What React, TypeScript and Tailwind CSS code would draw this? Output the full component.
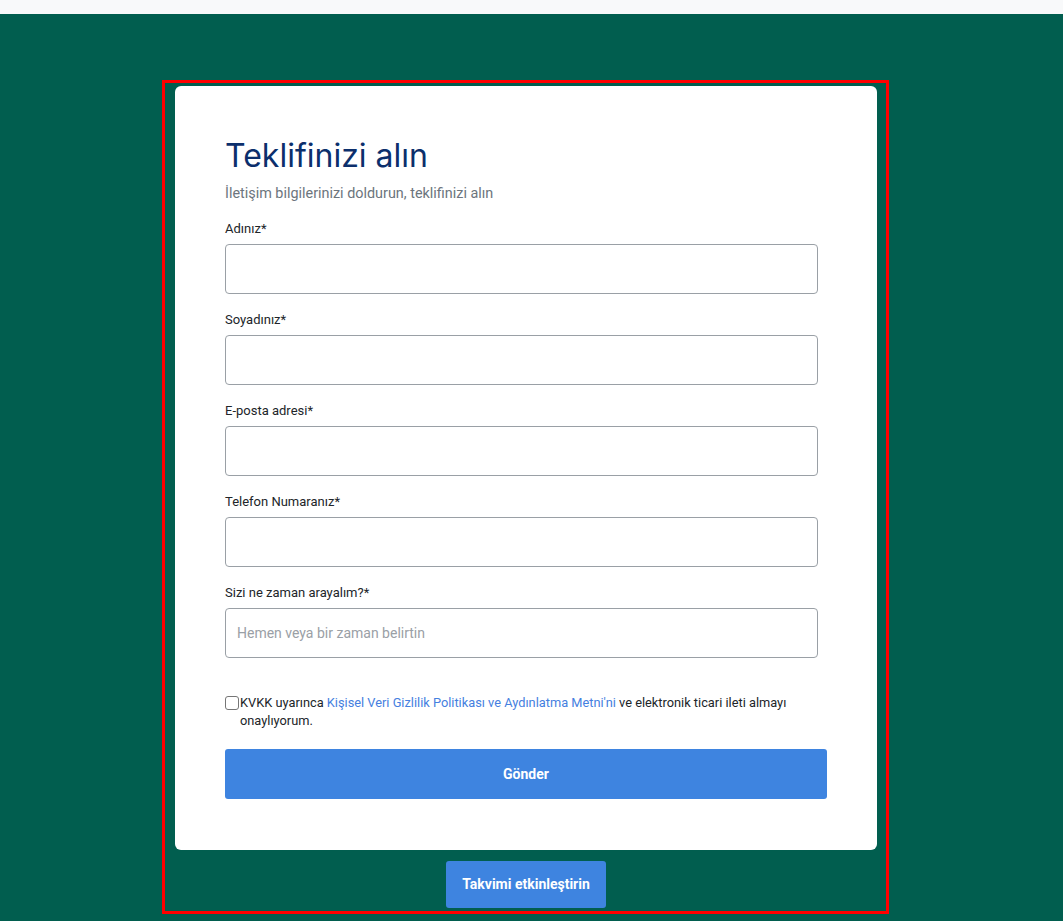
import React from 'react';

const fields = [
  { label: 'Adınız*', placeholder: '' },
  { label: 'Soyadınız*', placeholder: '' },
  { label: 'E-posta adresi*', placeholder: '' },
  { label: 'Telefon Numaranız*', placeholder: '' },
  { label: 'Sizi ne zaman arayalım?*', placeholder: 'Hemen veya bir zaman belirtin' },
];

const App: React.FC = () => {
  return (
    <div className="min-h-screen bg-[#015e4f]" style={{ fontFamily: 'Roboto, "Liberation Sans", sans-serif' }}>
      <div className="h-[14px] bg-[#f8f9fa]" />
      <div className="flex pt-[66px] pl-[162px]">
        <div className="w-[727px] border-[3px] border-[#ff0000] pl-[10px] pr-[9px] pt-[3px] flex flex-col items-center">
          <div className="w-full bg-white rounded-[6px] pl-[50px] pr-[50px] pt-[51px] pb-[51px]">
            <h1
              className="text-[32px] leading-[38px] text-[#0c2f6c]"
              style={{ fontFamily: 'Inter, "Open Sans", sans-serif' }}
            >
              Teklifinizi alın
            </h1>
            <p className="mt-[9px] text-[14.4px] leading-[20px] text-[#6c757d]">
              İletişim bilgilerinizi doldurun, teklifinizi alın
            </p>
            <form className="mt-[15px]" onSubmit={(e) => e.preventDefault()}>
              {fields.map((f) => (
                <div key={f.label} className="mb-[16px]">
                  <label className="block text-[13px] leading-[20px] text-[#212529] mb-[5px]">{f.label}</label>
                  <input
                    type="text"
                    placeholder={f.placeholder}
                    className="block w-[593px] h-[50px] border border-[#9aa0a6] rounded-[4px] bg-white px-[11px] text-[14px] text-[#212529] placeholder:text-[#9aa0a6] outline-none"
                  />
                </div>
              ))}
              <div className="mt-[36px] flex items-start text-[12.8px] leading-[18px] text-[#212529]">
                <input
                  type="checkbox"
                  className="appearance-none shrink-0 w-[14px] h-[14px] mt-[2px] border border-[#767676] rounded-[3px] bg-white"
                />
                <span className="pl-[1px]">
                  KVKK uyarınca{' '}
                  <a href="#" className="text-[#4580e0]">
                    Kişisel Veri Gizlilik Politikası ve Aydınlatma Metni'ni
                  </a>{' '}
                  ve elektronik ticari ileti almayı onaylıyorum.
                </span>
              </div>
              <button
                type="submit"
                className="mt-[19px] w-full h-[50px] rounded-[3px] bg-[#3e84e0] text-white text-[14px] font-bold"
              >
                Gönder
              </button>
            </form>
          </div>
          <button className="mt-[11px] mb-[3px] w-[160px] h-[47px] rounded-[3px] bg-[#3e84e0] text-white text-[14px] font-bold">
            Takvimi etkinleştirin
          </button>
        </div>
      </div>
    </div>
  );
};

export default App;
